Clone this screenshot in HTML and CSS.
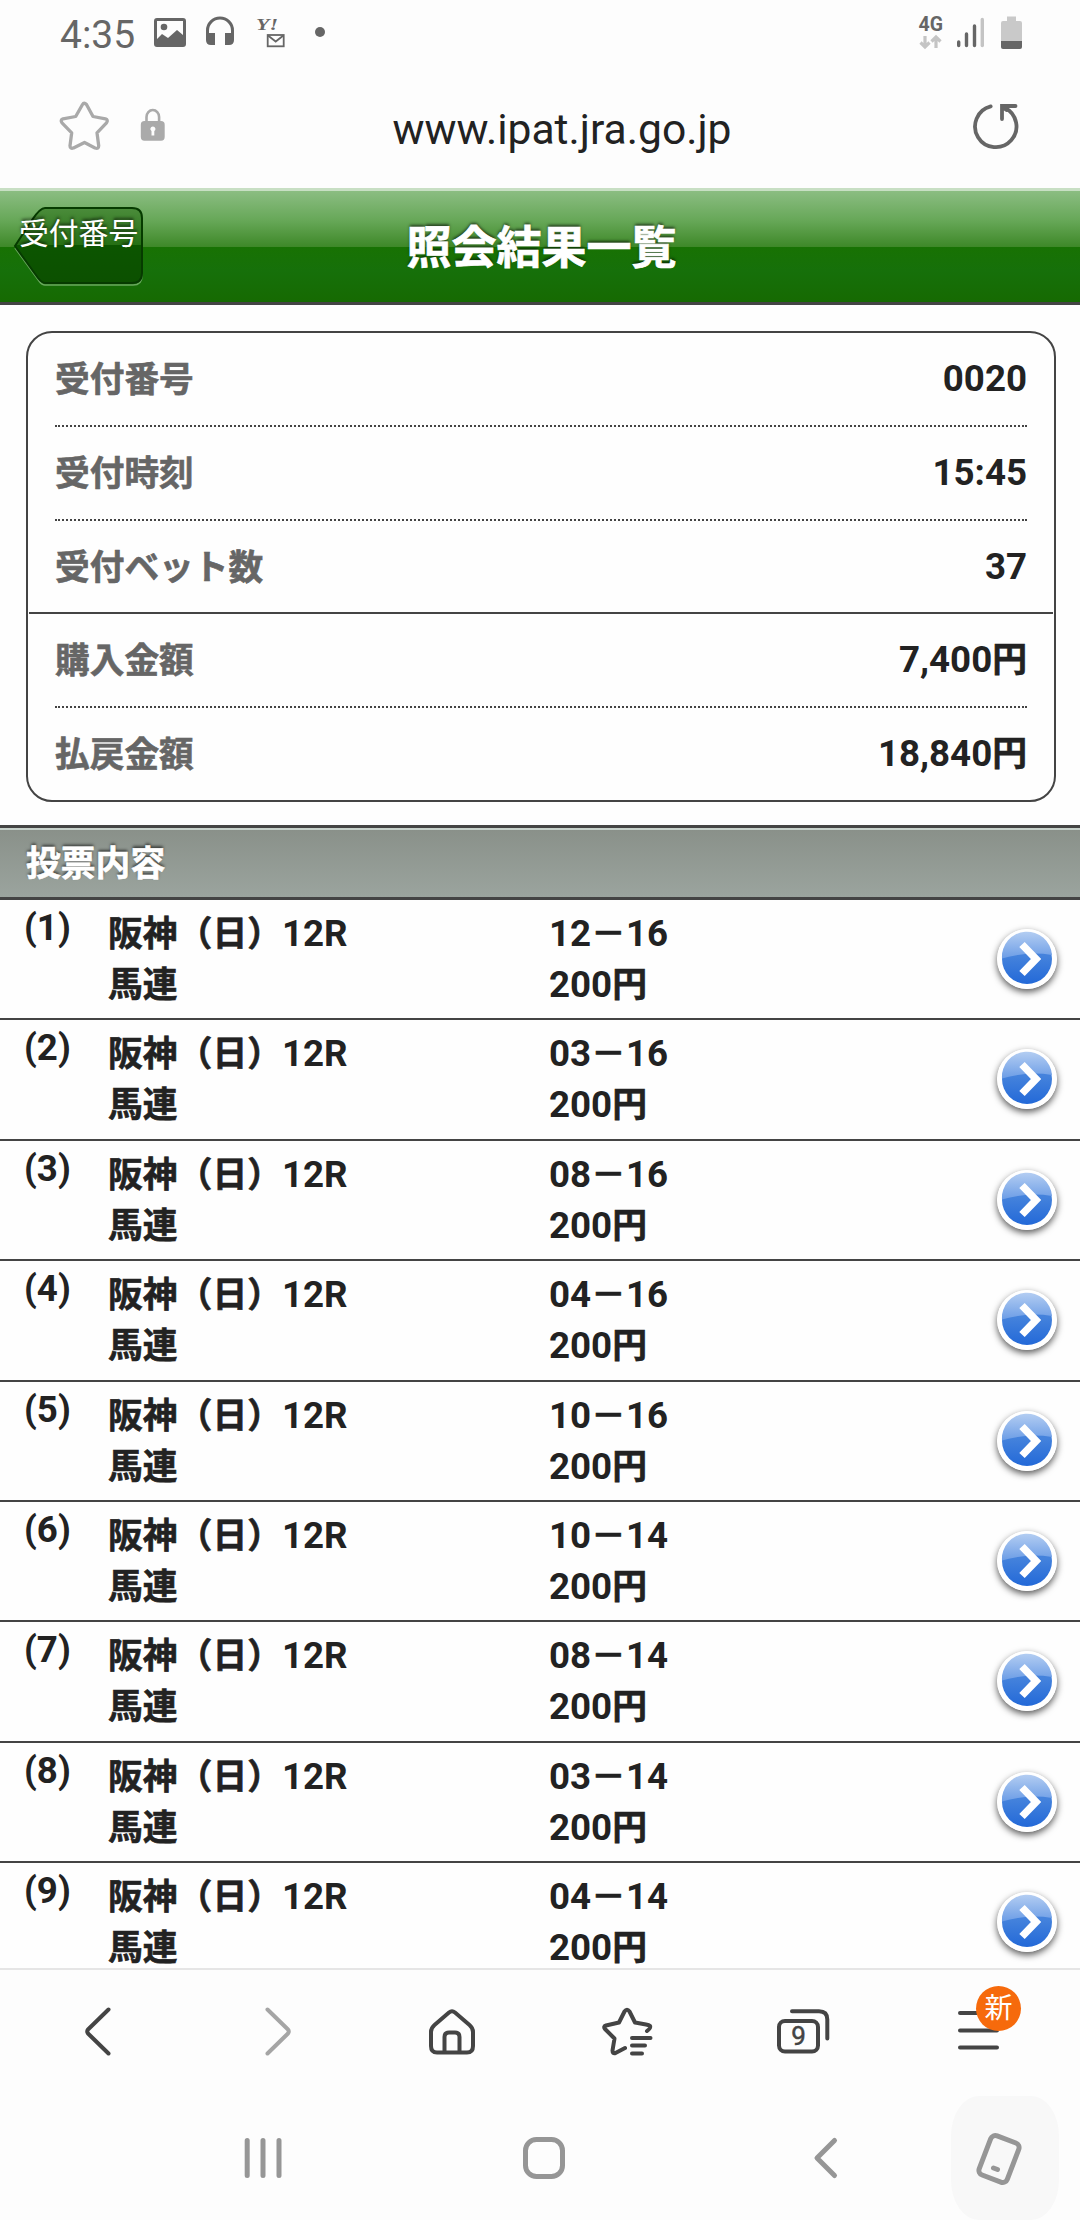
FILE: index.html
```html
<!DOCTYPE html>
<html lang="ja">
<head>
    <meta charset="UTF-8">
    <meta name="viewport" content="width=device-width, initial-scale=1.0">
    <title>照会結果一覧</title>
    <link rel="stylesheet" href="styles.css">
</head>
<body>
    <!-- shared icon -->
    <svg class="defs" width="0" height="0">
        <defs>
            <linearGradient id="blue" x1="0" y1="0" x2="0" y2="1">
                <stop offset="0" stop-color="#4d87df"/>
                <stop offset="0.45" stop-color="#4482dc"/>
                <stop offset="1" stop-color="#2369d8"/>
            </linearGradient>
            <linearGradient id="gloss" x1="0" y1="0" x2="0" y2="1">
                <stop offset="0" stop-color="#b3cdf2"/>
                <stop offset="1" stop-color="#6c9de6"/>
            </linearGradient>
            <linearGradient id="backFill" x1="0" y1="0" x2="0" y2="1">
                <stop offset="0" stop-color="#4b8c3b"/>
                <stop offset="0.5" stop-color="#256f13"/>
                <stop offset="0.5" stop-color="#0c5500"/>
                <stop offset="1" stop-color="#0c5000"/>
            </linearGradient>
            <symbol id="arrow" viewBox="0 0 60 60">
                <circle cx="30" cy="30" r="30" fill="#fff"/>
                <circle cx="30" cy="30" r="25" fill="url(#blue)"/>
                <path d="M5 29.500A25 25 0 0 1 55 26Q30 22 5 29.500Z" fill="url(#gloss)"/>
                <path d="M25 15.500L39 30L25 44.500" fill="none" stroke="#fff" stroke-width="7.500"/>
            </symbol>
        </defs>
    </svg>

    <div class="screen">
        <div class="status-bar">
            <span class="clock">4:35</span>
            <svg class="status-left" width="190" height="40" viewBox="150 12 190 40">
                <path fill="#666" fill-rule="evenodd" d="M157 18h26q3 0 3 3v23q0 3-3 3h-26q-3 0-3-3v-23q0-3 3-3zM157 21v18l5-5 6 4 9-8 6 5v-14z"/>
                <circle cx="164" cy="27" r="3.300" fill="#666"/>
                <path d="M207.500 36V30.500a12.500 12.500 0 0 1 25 0V36" fill="none" stroke="#666" stroke-width="3"/>
                <path d="M206 33h9v12h-4q-5 0-5-5zM225 33h9v7q0 5-5 5h-4z" fill="#666"/>
                <text class="yahoo" x="256" y="29.500" textLength="22" lengthAdjust="spacingAndGlyphs">Y!</text>
                <rect x="267.700" y="35" width="16" height="11.300" fill="none" stroke="#666" stroke-width="1.800"/>
                <path d="M268 35.500l7.700 6 7.700-6" fill="none" stroke="#666" stroke-width="1.800"/>
                <circle cx="320" cy="32" r="5" fill="#666"/>
            </svg>
            <svg class="status-right" width="110" height="40" viewBox="914 12 110 40">
                <text class="network" x="917.500" y="30.500">4G</text>
                <path d="M924 36v11M919.500 42.500l4.500 4.500 4.500-4.500M935 48V37M930.500 41.500l4.500-4.500 4.500 4.500" fill="none" stroke="#c4c4c4" stroke-width="3.200"/>
                <path d="M957.700 42v3.500M965.500 34v11.500M973.500 26v19.500" stroke="#666" stroke-width="3.400" stroke-linecap="round"/>
                <path d="M981.300 19.500v26" stroke="#c4c4c4" stroke-width="3.400" stroke-linecap="round"/>
                <path d="M1006 16.500h9v4.500h4q2 0 2 2v18h-21v-18q0-2 2-2h4z" fill="#c9c9c9"/>
                <path d="M1000 41h21v6q0 2-2 2h-17q-2 0-2-2z" fill="#666"/>
            </svg>
        </div>

        <div class="address-bar">
            <svg width="120" height="60" viewBox="54 98 120 60">
                <path d="M82.500 105.500q1.500-2.500 4 0l6.500 12 12.500 2.300q3 1 1 4l-9.500 10 1.700 13q0 3.500-3.700 2.200L84.500 143.500 73.500 149q-3.500 1-3.500-2.200l1.700-13-9.700-10q-2-3 1-4l12.700-2.300z" transform="translate(0 1)" fill="none" stroke="#a9a9a9" stroke-width="3.300" stroke-linejoin="round"/>
                <path d="M146.500 125v-6a6.300 7 0 0 1 12.600 0v6" fill="none" stroke="#aaa" stroke-width="2.600"/>
                <path fill="#aaa" fill-rule="evenodd" d="M144.500 123h16.500q3.700 0 3.700 3.700v12q0 4-3.700 4h-16.500q-3.700 0-3.700-4v-12q0-3.700 3.700-3.700zM152.800 128.500a2.500 2.500 0 0 0-1.300 4.600v4.400h2.800v-4.400a2.500 2.500 0 0 0-1.500-4.600z"/>
            </svg>
            <span class="url">www.ipat.jra.go.jp</span>
            <svg width="60" height="60" viewBox="965 96 60 60">
                <path d="M990.700 106.400A20.700 20.700 0 1 0 1004.500 107.700" fill="none" stroke="#666" stroke-width="3.800" stroke-linecap="round"/>
                <path d="M1002 119v-13h13.500M1002.500 107l4 3" fill="none" stroke="#666" stroke-width="3.800" stroke-linecap="round"/>
            </svg>
        </div>

        <div class="page">
            <div class="header">
                <a class="back" href="#">
                    <svg width="132" height="82" viewBox="12 205 132 82">
                        <path d="M44 210H133Q142 210 142 219V276Q142 285 133 285H45Q42 285 39 281L15 248" fill="none" stroke="#69a75d" stroke-width="1.500"/>
                        <path d="M45 208H132Q142 208 142 218V273Q142 283 132 283H45Q42 283 38 278L15 246L32 220Q40 208 45 208Z" fill="url(#backFill)" stroke="#063b00" stroke-width="2"/>
                    </svg>
                    <span>受付番号</span>
                </a>
                <h1>照会結果一覧</h1>
            </div>

            <dl class="summary">
                <div class="item"><dt>受付番号</dt><dd>0020</dd></div>
                <div class="item"><dt>受付時刻</dt><dd>15:45</dd></div>
                <div class="item last"><dt>受付ベット数</dt><dd>37</dd></div>
                <div class="divider"></div>
                <div class="item"><dt>購入金額</dt><dd>7,400<span class="ja">円</span></dd></div>
                <div class="item last"><dt>払戻金額</dt><dd>18,840<span class="ja">円</span></dd></div>
            </dl>

            <h2>投票内容</h2>

            <ul class="bets">
                <li>
                    <span class="no">(1)</span>
                    <div class="race"><span class="ja">阪神（日）</span>12R<br><span class="ja">馬連</span></div>
                    <div class="pick">12<span class="ja">－</span>16<br>200<span class="ja">円</span></div>
                    <svg class="go"><use href="#arrow"/></svg>
                </li>
                <li>
                    <span class="no">(2)</span>
                    <div class="race"><span class="ja">阪神（日）</span>12R<br><span class="ja">馬連</span></div>
                    <div class="pick">03<span class="ja">－</span>16<br>200<span class="ja">円</span></div>
                    <svg class="go"><use href="#arrow"/></svg>
                </li>
                <li>
                    <span class="no">(3)</span>
                    <div class="race"><span class="ja">阪神（日）</span>12R<br><span class="ja">馬連</span></div>
                    <div class="pick">08<span class="ja">－</span>16<br>200<span class="ja">円</span></div>
                    <svg class="go"><use href="#arrow"/></svg>
                </li>
                <li>
                    <span class="no">(4)</span>
                    <div class="race"><span class="ja">阪神（日）</span>12R<br><span class="ja">馬連</span></div>
                    <div class="pick">04<span class="ja">－</span>16<br>200<span class="ja">円</span></div>
                    <svg class="go"><use href="#arrow"/></svg>
                </li>
                <li>
                    <span class="no">(5)</span>
                    <div class="race"><span class="ja">阪神（日）</span>12R<br><span class="ja">馬連</span></div>
                    <div class="pick">10<span class="ja">－</span>16<br>200<span class="ja">円</span></div>
                    <svg class="go"><use href="#arrow"/></svg>
                </li>
                <li>
                    <span class="no">(6)</span>
                    <div class="race"><span class="ja">阪神（日）</span>12R<br><span class="ja">馬連</span></div>
                    <div class="pick">10<span class="ja">－</span>14<br>200<span class="ja">円</span></div>
                    <svg class="go"><use href="#arrow"/></svg>
                </li>
                <li>
                    <span class="no">(7)</span>
                    <div class="race"><span class="ja">阪神（日）</span>12R<br><span class="ja">馬連</span></div>
                    <div class="pick">08<span class="ja">－</span>14<br>200<span class="ja">円</span></div>
                    <svg class="go"><use href="#arrow"/></svg>
                </li>
                <li>
                    <span class="no">(8)</span>
                    <div class="race"><span class="ja">阪神（日）</span>12R<br><span class="ja">馬連</span></div>
                    <div class="pick">03<span class="ja">－</span>14<br>200<span class="ja">円</span></div>
                    <svg class="go"><use href="#arrow"/></svg>
                </li>
                <li>
                    <span class="no">(9)</span>
                    <div class="race"><span class="ja">阪神（日）</span>12R<br><span class="ja">馬連</span></div>
                    <div class="pick">04<span class="ja">－</span>14<br>200<span class="ja">円</span></div>
                    <svg class="go"><use href="#arrow"/></svg>
                </li>
            </ul>
        </div>

        <div class="toolbar">
            <svg viewBox="68 2001 60 60"><path d="M108.500 2009.500L88 2029.500Q86.500 2031.500 88 2033.500L108.500 2053.500"/></svg>
            <svg class="disabled" viewBox="244 2001 60 60"><path d="M267.500 2009.500L288 2029.500Q289.500 2031.500 288 2033.500L267.500 2053.500"/></svg>
            <svg viewBox="420 2001 60 60">
                <path d="M434.500 2025L449 2012.500Q452 2010 455 2012.500L469.500 2025Q473 2028 473 2032V2046Q473 2052.500 467 2052.500H437Q431 2052.500 431 2046V2032Q431 2028 434.500 2025Z"/>
                <path d="M444.500 2052V2037Q444.500 2032.500 449 2032.500H455Q459.500 2032.500 459.500 2037V2052"/>
            </svg>
            <svg viewBox="596 2001 60 60">
                <path d="M647 2031Q651 2028 650 2026Q649 2025 646 2024.500L635 2022.500L629.500 2011.500Q627 2008 624.500 2011.500L619 2022.500L606 2025.500Q603 2026.500 605 2029L614.500 2038.500L612.500 2050.500Q612.500 2054 615.500 2053L625 2048"/>
                <path d="M632 2038H650.500M632 2045.500H645M632 2053.500H642"/>
            </svg>
            <svg viewBox="772 2001 60 60">
                <rect x="779" y="2021" width="39" height="30.500" rx="6"/>
                <path d="M792 2011.300H819Q827.300 2011.300 827.300 2019.500V2038.500"/>
                <text x="798.500" y="2045">9</text>
            </svg>
            <div class="menu">
                <svg viewBox="948 2001 60 60"><path d="M960 2013H996M960 2030.500H997M960 2047.500H997"/></svg>
                <span class="badge">新</span>
            </div>
        </div>

        <div class="nav-bar">
            <svg viewBox="233 2128 60 60"><path d="M247.200 2140.500V2175.500M263 2140.500V2175.500M279 2140.500V2175.500"/></svg>
            <svg viewBox="514 2128 60 60"><rect x="525.500" y="2139.500" width="37" height="37" rx="11"/></svg>
            <svg viewBox="795 2128 60 60"><path d="M834.500 2140.500L817 2158L834.500 2175.500"/></svg>
            <div class="rotate">
                <svg viewBox="975 2128 60 60">
                    <rect x="984" y="2138" width="30" height="42" rx="5" transform="rotate(21 999 2159)"/>
                    <path d="M993.500 2168L997.500 2169.500"/>
                </svg>
            </div>
        </div>
    </div>
</body>
</html>
```

FILE: styles.css
```css
* {
    box-sizing: border-box;
}
body {
    margin: 0;
    background-color: #fdfdfd;
    color: #222;
    font-family: Roboto, "Noto Sans CJK JP", sans-serif;
}
h1, h2, dl, dd, ul {
    margin: 0;
    padding: 0;
}
.defs {
    position: absolute;
}
.screen {
    width: 1080px;
    height: 2220px;
    display: flex;
    flex-direction: column;
    overflow: hidden;
}

/* status bar */
.status-bar {
    height: 66px;
    display: flex;
    align-items: flex-start;
    padding: 12px 55px 0 60px;
}
.clock {
    width: 90px;
    font-size: 39px;
    line-height: 46px;
    color: #666;
}
.status-right {
    margin-left: auto;
}
.yahoo {
    font-family: "Liberation Serif", serif;
    font-size: 16px;
    font-weight: bold;
    font-style: italic;
    fill: #666;
}
.network {
    font-size: 19.5px;
    font-weight: bold;
    fill: #666;
}

/* address bar */
.address-bar {
    height: 122px;
    display: flex;
    align-items: center;
    justify-content: space-between;
    padding: 0 55px 2px 54px;
}
.url {
    width: 440px;
    margin-right: 15px;
    padding-top: 5px;
    text-align: center;
    font-size: 42.6px;
    line-height: 60px;
}

/* page */
.page {
    flex: 1;
    overflow: hidden;
    background-color: #fefefe;
}
.header {
    height: 117px;
    position: relative;
    display: flex;
    align-items: center;
    justify-content: center;
    border-top: 3px solid #c8dfc4;
    border-bottom: 3px solid #444;
    background: linear-gradient(#8bbd82 0, #66a757 30px, #3e8828 56px, #187203 56px, #16700a 80px, #166a02 100%);
}
.header h1 {
    padding: 4px 0 0 3px;
    font-size: 45px;
    line-height: 60px;
    color: #fff;
    -webkit-text-stroke: 0.7px #fff;
    text-shadow: 0 -2px 3px rgba(0, 0, 0, 0.6);
}
.back {
    position: absolute;
    left: 12px;
    top: 14px;
    width: 132px;
    height: 82px;
    color: #fff;
    text-decoration: none;
}
.back span {
    position: absolute;
    left: 7px;
    top: 8px;
    font-size: 29.8px;
    line-height: 42px;
    white-space: nowrap;
    text-shadow: 0 -2px 3px rgba(0, 0, 0, 0.6);
}
.summary {
    margin: 26px 24px 23px 26px;
    padding: 0 1px;
    border: 2px solid #444;
    border-radius: 26px;
}
.item {
    height: 94px;
    margin: 0 26px;
    display: flex;
    justify-content: space-between;
    border-bottom: 2px dotted #444;
    font-size: 36.7px;
    line-height: 92px;
    font-weight: bold;
}
.item.last {
    height: 91px;
    border-bottom: 0;
}
.item.last:last-child {
    height: 92px;
}
.divider {
    height: 2px;
    background-color: #444;
}
.item dt {
    padding-top: 1px;
    font-size: 34.7px;
    color: #666;
    -webkit-text-stroke: 0.6px #666;
}
.ja {
    font-size: 34.8px;
    line-height: 1;
    -webkit-text-stroke: 0.6px #222;
}
h2 {
    height: 75px;
    padding-left: 26px;
    border-top: 3px solid #444;
    border-bottom: 3px solid #444;
    box-shadow: inset 0 2px #c5d0ca;
    background: linear-gradient(#899089, #9ba49e);
    color: #fff;
    font-size: 34.8px;
    line-height: 73px;
    -webkit-text-stroke: 0.6px #fff;
    text-shadow: 0 -2px 3px rgba(0, 0, 0, 0.6);
}

/* bet list */
.bets {
    list-style: none;
}
.bets li {
    height: 120.4px;
    display: grid;
    grid-template-columns: 84px 441px 1fr 60px;
    padding: 0 23px 0 24px;
    border-bottom: 2px solid #444;
    font-size: 36.7px;
    line-height: 51px;
    font-weight: bold;
}
.no {
    padding-top: 2px;
}
.race, .pick {
    padding-top: 8px;
}
.go {
    width: 60px;
    height: 60px;
    margin-top: 29px;
    border-radius: 50%;
    box-shadow: 0 3px 7px rgba(0, 0, 0, 0.65);
}

/* browser toolbar */
.toolbar {
    height: 128px;
    display: grid;
    grid-template-columns: repeat(6, 176px);
    justify-items: center;
    padding: 31px 14px 0 10px;
    border-top: 2px solid #e5e5e5;
}
.toolbar svg, .nav-bar svg {
    display: block;
    width: 60px;
    height: 60px;
    fill: none;
    stroke: #444;
    stroke-width: 4;
    stroke-linecap: round;
    stroke-linejoin: round;
}
.toolbar svg.disabled {
    stroke: #a5a5a5;
}
.toolbar text {
    fill: #444;
    stroke: #444;
    stroke-width: 0.5;
    font-size: 26px;
    text-anchor: middle;
}
.menu {
    position: relative;
}
.badge {
    position: absolute;
    left: 28px;
    top: -15px;
    width: 45px;
    height: 45px;
    border-radius: 50%;
    background-color: #f66a0c;
    color: #fff;
    font-size: 28px;
    line-height: 45px;
    text-align: center;
}

/* system navigation */
.nav-bar {
    height: 124px;
    display: flex;
    align-items: center;
    gap: 221px;
    padding-left: 233px;
}
.nav-bar svg {
    flex: none;
    stroke: #969696;
    stroke-width: 5;
}
.rotate {
    flex: none;
    width: 108px;
    height: 124px;
    margin-left: -125px;
    display: flex;
    align-items: center;
    justify-content: center;
    border-radius: 28px / 40px;
    background-color: #f8f8f8;
}
```
